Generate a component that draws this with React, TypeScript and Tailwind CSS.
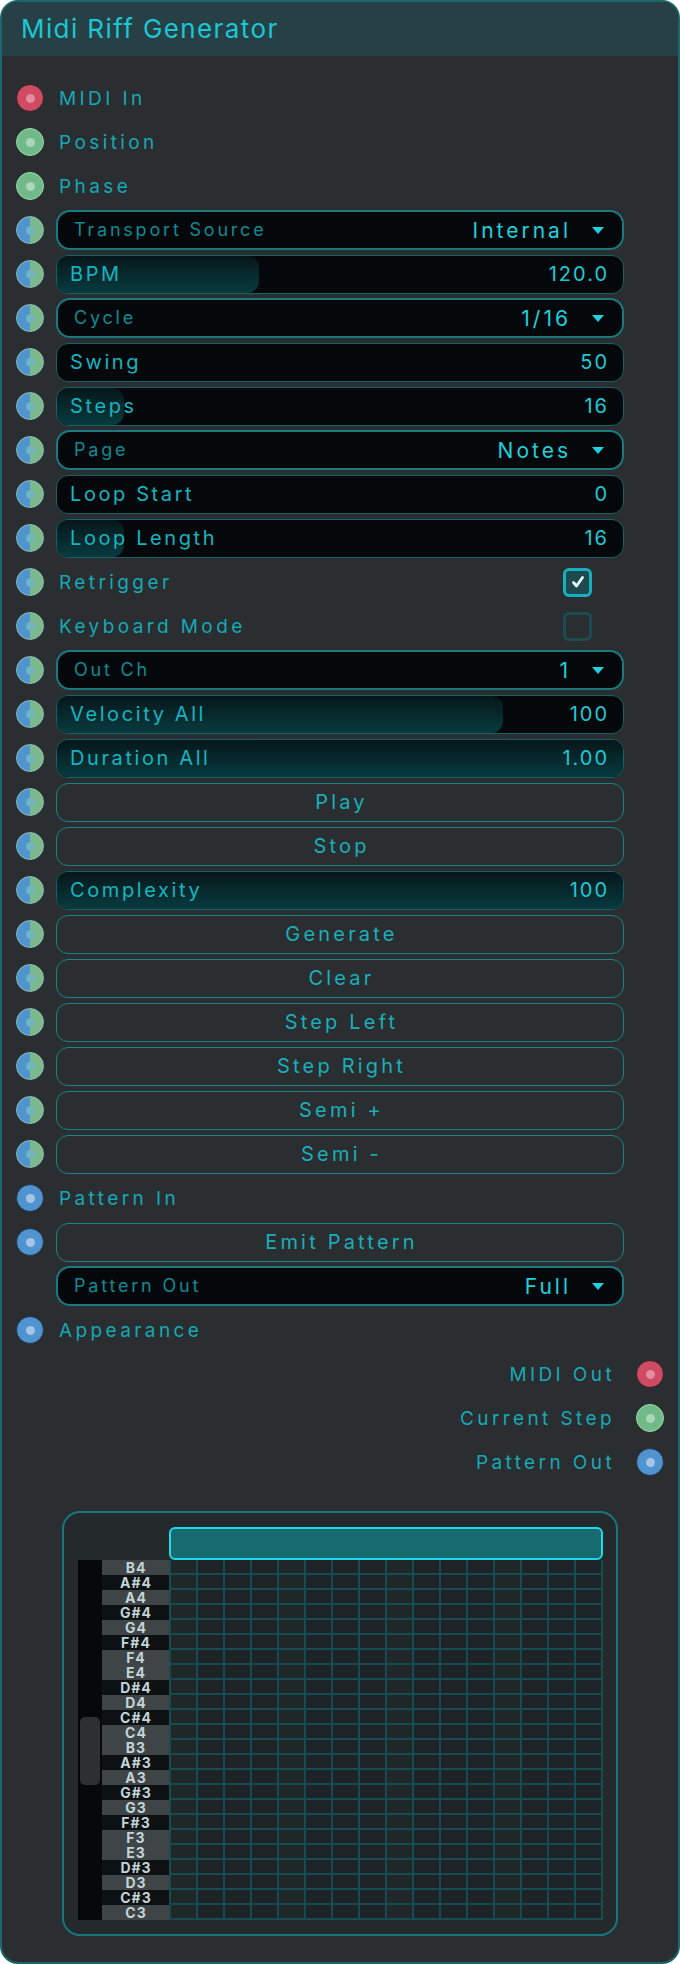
import React from "react";

type PortKind = "red" | "green" | "split" | "blue" | "none";

type Row =
  | { port: PortKind; type: "label"; label: string }
  | { port: PortKind; type: "dropdown"; label: string; value: string }
  | { port: PortKind; type: "slider"; label: string; value: string; fill: number }
  | { port: PortKind; type: "check"; label: string; checked: boolean }
  | { port: PortKind; type: "button"; label: string };

const rows: Row[] = [
  { port: "red", type: "label", label: "MIDI In" },
  { port: "green", type: "label", label: "Position" },
  { port: "green", type: "label", label: "Phase" },
  { port: "split", type: "dropdown", label: "Transport Source", value: "Internal" },
  { port: "split", type: "slider", label: "BPM", value: "120.0", fill: 202 },
  { port: "split", type: "dropdown", label: "Cycle", value: "1/16" },
  { port: "split", type: "slider", label: "Swing", value: "50", fill: 0 },
  { port: "split", type: "slider", label: "Steps", value: "16", fill: 67 },
  { port: "split", type: "dropdown", label: "Page", value: "Notes" },
  { port: "split", type: "slider", label: "Loop Start", value: "0", fill: 0 },
  { port: "split", type: "slider", label: "Loop Length", value: "16", fill: 67 },
  { port: "split", type: "check", label: "Retrigger", checked: true },
  { port: "split", type: "check", label: "Keyboard Mode", checked: false },
  { port: "split", type: "dropdown", label: "Out Ch", value: "1" },
  { port: "split", type: "slider", label: "Velocity All", value: "100", fill: 446 },
  { port: "split", type: "slider", label: "Duration All", value: "1.00", fill: 568 },
  { port: "split", type: "button", label: "Play" },
  { port: "split", type: "button", label: "Stop" },
  { port: "split", type: "slider", label: "Complexity", value: "100", fill: 568 },
  { port: "split", type: "button", label: "Generate" },
  { port: "split", type: "button", label: "Clear" },
  { port: "split", type: "button", label: "Step Left" },
  { port: "split", type: "button", label: "Step Right" },
  { port: "split", type: "button", label: "Semi +" },
  { port: "split", type: "button", label: "Semi -" },
  { port: "blue", type: "label", label: "Pattern In" },
  { port: "blue", type: "button", label: "Emit Pattern" },
  { port: "none", type: "dropdown", label: "Pattern Out", value: "Full" },
  { port: "blue", type: "label", label: "Appearance" },
];

const outputs: { port: PortKind; label: string }[] = [
  { port: "red", label: "MIDI Out" },
  { port: "green", label: "Current Step" },
  { port: "blue", label: "Pattern Out" },
];

function Port({ kind }: { kind: PortKind }) {
  if (kind === "none") return <div className="w-[28px] h-[28px] shrink-0" />;
  if (kind === "red")
    return (
      <div className="w-[28px] h-[28px] shrink-0 rounded-full bg-[#cf4a63] border-[1.5px] border-[#3a1f25] flex items-center justify-center">
        <div className="w-[9px] h-[9px] rounded-full bg-[#e38d9d]" />
      </div>
    );
  if (kind === "green")
    return (
      <div className="w-[28px] h-[28px] shrink-0 rounded-full bg-[#72b98a] border-[1.5px] border-[#92dba6] flex items-center justify-center">
        <div className="w-[9px] h-[9px] rounded-full bg-[#a9d7b7]" />
      </div>
    );
  if (kind === "blue")
    return (
      <div className="w-[28px] h-[28px] shrink-0 rounded-full bg-[#4f93d0] border-[1.5px] border-[#223244] flex items-center justify-center">
        <div className="w-[9px] h-[9px] rounded-full bg-[#a3c4e3]" />
      </div>
    );
  return (
    <div className="w-[28px] h-[28px] shrink-0 rounded-full bg-[linear-gradient(90deg,#4f93cf_50%,#7bb98c_50%)] border-[1.5px] border-[#8bbfb9] flex items-center justify-center">
      <div className="w-[9px] h-[9px] rounded-full bg-[#6fb6c3]" />
    </div>
  );
}

function Control({ row }: { row: Row }) {
  if (row.type === "label")
    return <span className="pl-[3px] text-[19px] tracking-[3.4px] text-[#17a8b5] leading-none">{row.label}</span>;
  if (row.type === "dropdown")
    return (
      <div className="h-[40px] w-full rounded-[14px] border-2 border-[#1a7a81] bg-[#04080a] flex items-center pl-[16px] pr-[18px]">
        <span className="flex-1 text-[18px] tracking-[2.8px] text-[#138993] leading-none">{row.label}</span>
        <span className="text-[21px] tracking-[3px] text-[#1fd0de] leading-none">{row.value}</span>
        <svg width="12" height="7" viewBox="0 0 12 7" className="ml-[21px]">
          <polygon points="0,0 12,0 6,7" fill="#1fd0de" />
        </svg>
      </div>
    );
  if (row.type === "slider")
    return (
      <div className="relative h-[39px] w-full rounded-[12px] border border-[#14636a] bg-[#04080a] overflow-hidden flex items-center pl-[13px] pr-[14px]">
        {row.fill > 0 && (
          <div
            className="absolute left-0 top-0 bottom-0 rounded-[12px] bg-[linear-gradient(180deg,#05171a,#083b3f)]"
            style={{ width: row.fill }}
          />
        )}
        <span className="relative flex-1 text-[20px] tracking-[2.6px] text-[#19b3c0] leading-none">{row.label}</span>
        <span className="relative text-[20px] tracking-[2px] text-[#20c8d6] leading-none">{row.value}</span>
      </div>
    );
  if (row.type === "check")
    return (
      <div className="w-full flex items-center">
        <span className="flex-1 pl-[3px] text-[19px] tracking-[3.4px] text-[#17a8b5] leading-none">{row.label}</span>
        <div
          className={
            row.checked
              ? "mr-[32px] w-[29px] h-[29px] rounded-[6px] border-[3px] border-[#16b1be] bg-[#1d4a4e] flex items-center justify-center"
              : "mr-[32px] w-[29px] h-[29px] rounded-[6px] border-[3px] border-[#1c4c50] flex items-center justify-center"
          }
        >
          {row.checked && (
            <svg width="14" height="14" viewBox="0 0 14 14">
              <polyline points="2.5,7.5 5.5,11 11.5,2.5" fill="none" stroke="#e6fbff" strokeWidth="2.8" strokeLinecap="round" strokeLinejoin="round" />
            </svg>
          )}
        </div>
      </div>
    );
  return (
    <div className="h-[39px] w-full rounded-[12px] border border-[#1a8389] flex items-center justify-center">
      <span className="pl-[3px] text-[20px] tracking-[3.2px] text-[#1aaebb] leading-none">{row.label}</span>
    </div>
  );
}

const keys: { name: string; black: boolean }[] = [
  { name: "B4", black: false },
  { name: "A#4", black: true },
  { name: "A4", black: false },
  { name: "G#4", black: true },
  { name: "G4", black: false },
  { name: "F#4", black: true },
  { name: "F4", black: false },
  { name: "E4", black: false },
  { name: "D#4", black: true },
  { name: "D4", black: false },
  { name: "C#4", black: true },
  { name: "C4", black: false },
  { name: "B3", black: false },
  { name: "A#3", black: true },
  { name: "A3", black: false },
  { name: "G#3", black: true },
  { name: "G3", black: false },
  { name: "F#3", black: true },
  { name: "F3", black: false },
  { name: "E3", black: false },
  { name: "D#3", black: true },
  { name: "D3", black: false },
  { name: "C#3", black: true },
  { name: "C3", black: false },
];

function PianoRoll() {
  const cells: React.ReactNode[] = [];
  for (let r = 0; r < 24; r++) {
    for (let c = 0; c < 16; c++) {
      cells.push(
        <div key={r * 16 + c} className={c % 4 === 0 ? "bg-[#202729]" : "bg-[#1d2326]"} />
      );
    }
  }
  return (
    <div className="mt-[27px] ml-[60px] w-[556px] h-[425px] shrink-0 rounded-[18px] border-2 border-[#17767c] bg-[#24292b] pt-[14px] pl-[14px]">
      <div className="flex h-[33px]">
        <div className="w-[91px]" />
        <div className="w-[434px] h-[33px] rounded-[6px] border-2 border-[#1fd9ea] bg-[#176a70]" />
      </div>
      <div className="flex">
        <div className="relative w-[24px] h-[360px] bg-[#060809]">
          <div className="absolute left-[2px] top-[157px] w-[20px] h-[68px] rounded-[5px] bg-[#2d3032]" />
        </div>
        <div className="w-[67px] flex flex-col">
          {keys.map((k) => (
            <div
              key={k.name}
              className={
                k.black
                  ? "h-[15px] pl-[1px] bg-[#0e1113] flex items-center justify-center text-[14px] font-bold tracking-[1px] text-[#c3d4d8] leading-none"
                  : "h-[15px] pl-[1px] bg-[#3f4447] flex items-center justify-center text-[14px] font-bold tracking-[1px] text-[#c3d4d8] leading-none"
              }
            >
              {k.name}
            </div>
          ))}
        </div>
        <div className="w-[434px] h-[360px] bg-[#164c51] grid grid-cols-16 grid-rows-[repeat(24,13px)] gap-[2px] px-[2px] pb-[2px]">
          {cells}
        </div>
      </div>
    </div>
  );
}

export default function App() {
  return (
    <div className="w-[680px] h-[1964px] bg-white">
      <div className="w-[680px] h-[1964px] rounded-[18px] border-2 border-[#1b666b] bg-[#2a2e30] overflow-hidden flex flex-col [font-family:Inter,sans-serif]">
        <div className="h-[54px] shrink-0 bg-[#264045] flex items-center pl-[19px]">
          <span className="text-[26px] tracking-[1.4px] text-[#1cc6d5] leading-none">Midi Riff Generator</span>
        </div>
        <div className="pt-[20px] flex flex-col shrink-0">
          {rows.map((row, i) => (
            <div key={i} className="h-[44px] flex items-center pl-[14px] pr-[54px]">
              <Port kind={row.port} />
              <div className="ml-[12px] flex-1 flex items-center">
                <Control row={row} />
              </div>
            </div>
          ))}
          {outputs.map((o, i) => (
            <div key={"o" + i} className="h-[44px] flex items-center justify-end pr-[14px]">
              <span className="mr-[21px] text-[19px] tracking-[3.4px] text-[#17a8b5] leading-none">{o.label}</span>
              <Port kind={o.port} />
            </div>
          ))}
        </div>
        <PianoRoll />
      </div>
    </div>
  );
}
